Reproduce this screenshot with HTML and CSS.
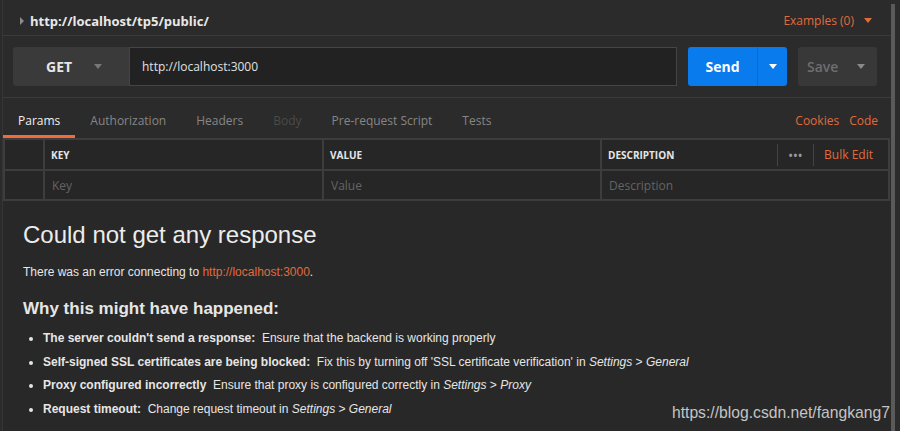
FILE: index.html
```html
<!DOCTYPE html>
<html>
<head>
<meta charset="utf-8">
<link rel="stylesheet" href="styles.css">
</head>
<body>
<div class="app">
  <div class="main">
    <div class="topbar">
      <div class="crumb"><span class="tri-right"></span><span class="title">http://localhost/tp5/public/</span></div>
      <div class="examples">Examples (0)<span class="caret orange"></span></div>
    </div>
    <div class="urlrow">
      <div class="method"><span>GET</span><span class="caret gray"></span></div>
      <div class="urlinput">http://localhost:3000</div>
      <div class="send"><span class="send-label">Send</span><span class="send-drop"><span class="caret white"></span></span></div>
      <div class="save"><span>Save</span><span class="caret gray2"></span></div>
    </div>
    <div class="tabs">
      <div class="tablist">
        <div class="tab active">Params</div>
        <div class="tab">Authorization</div>
        <div class="tab">Headers</div>
        <div class="tab dim">Body</div>
        <div class="tab">Pre-request Script</div>
        <div class="tab">Tests</div>
      </div>
      <div class="tablinks"><span>Cookies</span><span>Code</span></div>
    </div>
    <div class="table">
      <div class="cell"></div>
      <div class="cell head">KEY</div>
      <div class="cell head">VALUE</div>
      <div class="cell head desc">
        <span>DESCRIPTION</span>
        <div class="desc-tools"><span class="sep"></span><span class="dots">•••</span><span class="sep"></span><span class="bulk">Bulk Edit</span></div>
      </div>
      <div class="cell"></div>
      <div class="cell ph">Key</div>
      <div class="cell ph">Value</div>
      <div class="cell ph">Description</div>
    </div>
    <div class="response">
      <h1 class="r-title">Could not get any response</h1>
      <p class="r-text">There was an error connecting to <span class="link">http://localhost:3000</span>.</p>
      <h2 class="r-sub">Why this might have happened:</h2>
      <ul class="r-list">
        <li><b>The server couldn't send a response:</b>&nbsp; Ensure that the backend is working properly</li>
        <li><b>Self-signed SSL certificates are being blocked:</b>&nbsp; Fix this by turning off 'SSL certificate verification' in <i>Settings</i> &gt; <i>General</i></li>
        <li><b>Proxy configured incorrectly</b>&nbsp; Ensure that proxy is configured correctly in <i>Settings</i> &gt; <i>Proxy</i></li>
        <li><b>Request timeout:</b>&nbsp; Change request timeout in <i>Settings</i> &gt; <i>General</i></li>
      </ul>
      <div class="watermark">https://blog.csdn.net/fangkang7</div>
    </div>
  </div>
  <div class="scrollbar"></div>
</div>
</body>
</html>
```
FILE: styles.css
```css
html, body {
  margin: 0;
  padding: 0;
  background: #2b2b2b;
  height: 431px;
  overflow: hidden;
}
.app {
  display: flex;
  height: 431px;
}
.main {
  width: 888px;
  margin-left: 2px;
  border-left: 1px solid #353535;
  display: flex;
  flex-direction: column;
  font-family: "Open Sans", sans-serif;
}
.scrollbar {
  width: 4px;
  background: #5a5a5a;
  margin-top: 4px;
}
.topbar {
  border-bottom: 1px solid #3b3b3b;
  display: flex;
  align-items: center;
  justify-content: space-between;
  padding-top: 6px;
  box-sizing: border-box;
  height: 36px;
}
.crumb {
  display: flex;
  align-items: center;
  padding-left: 17px;
}
.tri-right {
  width: 0;
  height: 0;
  border-top: 4px solid transparent;
  border-bottom: 4px solid transparent;
  border-left: 4px solid #8c8c8c;
  margin-right: 6px;
}
.title {
  font-weight: 700;
  font-size: 13px;
  color: #e8e8e8;
}
.examples {
  font-size: 12px;
  color: #e26a3c;
  display: flex;
  align-items: center;
  padding-right: 19px;
}
.caret {
  display: inline-block;
  width: 0;
  height: 0;
  border-left: 4px solid transparent;
  border-right: 4px solid transparent;
  border-top: 5px solid #888;
}
.caret.orange { border-top-color: #e26a3c; margin-left: 10px; }
.caret.gray { border-top-color: #777; }
.caret.gray2 { border-top-color: #8a8a8a; }
.caret.white { border-top-color: #fff; }

.urlrow {
  display: flex;
  padding: 11px 12px 11px 10px;
  border-bottom: 1px solid #3b3b3b;
  height: 39px;
}
.method {
  width: 116px;
  background: #3a3a3a;
  border-radius: 3px 0 0 3px;
  display: flex;
  align-items: center;
  padding-left: 33px;
  box-sizing: border-box;
  gap: 22px;
  font-weight: 700;
  font-size: 14px;
  color: #e6e6e6;
}
.urlinput {
  width: 548px;
  background: #222;
  border: 1px solid #454545;
  box-sizing: border-box;
  display: flex;
  align-items: center;
  padding-left: 12px;
  font-size: 12px;
  color: #e0e0e0;
}
.send {
  margin-left: 11px;
  width: 99px;
  background: #097bed;
  border-radius: 3px;
  display: flex;
}
.send-label {
  width: 69px;
  display: flex;
  align-items: center;
  justify-content: center;
  font-weight: 700;
  font-size: 14px;
  color: #fff;
  border-right: 1px solid #0a6bcc;
}
.send-drop {
  flex: 1;
  display: flex;
  align-items: center;
  justify-content: center;
}
.save {
  margin-left: 11px;
  width: 79px;
  background: #383838;
  border-radius: 3px;
  display: flex;
  align-items: center;
  justify-content: space-between;
  padding: 0 12px 0 9px;
  box-sizing: border-box;
  font-weight: 600;
  font-size: 14px;
  color: #6e6e6e;
}

.tabs {
  height: 40px;
  display: flex;
  justify-content: space-between;
  font-size: 12px;
}
.tablist {
  display: flex;
}
.tab {
  padding: 0 15px;
  display: flex;
  align-items: center;
  padding-top: 8px;
  color: #868686;
  border-bottom: 3px solid transparent;
}
.tab.active {
  color: #f0f0f0;
  border-bottom-color: #f26b3a;
}
.tab.dim { color: #4a4a4a; }
.tablinks {
  display: flex;
  gap: 10px;
  align-items: center;
  padding-top: 5px;
  padding-right: 13px;
  color: #e26a3c;
}

.table {
  display: grid;
  grid-template-columns: 38px 277px 276px 1fr;
  grid-template-rows: 29px 28px;
  gap: 2px;
  padding: 2px;
  background: #3d3d3d;
  margin-right: 1px;
}
.cell {
  background: #262626;
  display: flex;
  align-items: center;
  padding-left: 6px;
  font-size: 12px;
}
.cell.head {
  font-weight: 700;
  font-size: 10px;
  color: #e6e6e6;
}
.cell.ph {
  color: #646464;
  padding-left: 7px;
}
.cell.desc {
  justify-content: space-between;
}
.desc-tools {
  display: flex;
  align-items: center;
  height: 100%;
  padding-right: 15px;
}
.sep {
  width: 1px;
  height: 22px;
  background: #444;
}
.dots {
  color: #9a9a9a;
  font-size: 10px;
  letter-spacing: 1px;
  padding: 0 10px 0 11px;
}
.bulk {
  color: #e26a3c;
  font-weight: 400;
  font-size: 12px;
  padding-left: 10px;
}

.response {
  flex: 1;
  background: #282828;
  position: relative;
  padding-left: 20px;
  font-family: "Liberation Sans", Arial, sans-serif;
  color: #e6e6e6;
}
.r-title {
  margin: 20px 0 0;
  font-weight: 400;
  font-size: 24px;
  line-height: 28px;
  color: #ececec;
}
.r-text {
  margin: 15px 0 0;
  font-size: 12px;
  line-height: 16px;
}
.link { color: #e26a3c; }
.r-sub {
  margin: 19px 0 0;
  font-size: 17px;
  line-height: 20px;
  font-weight: 700;
}
.r-list {
  margin: 8px 0 0;
  padding-left: 20px;
  font-size: 12px;
  line-height: 23.6px;
}
.r-list b { font-weight: 700; }
.watermark {
  position: absolute;
  right: 1px;
  bottom: 9px;
  color: #c4c4c4;
  font-family: "Liberation Sans", Arial, sans-serif;
  font-size: 15.7px;
}
```
